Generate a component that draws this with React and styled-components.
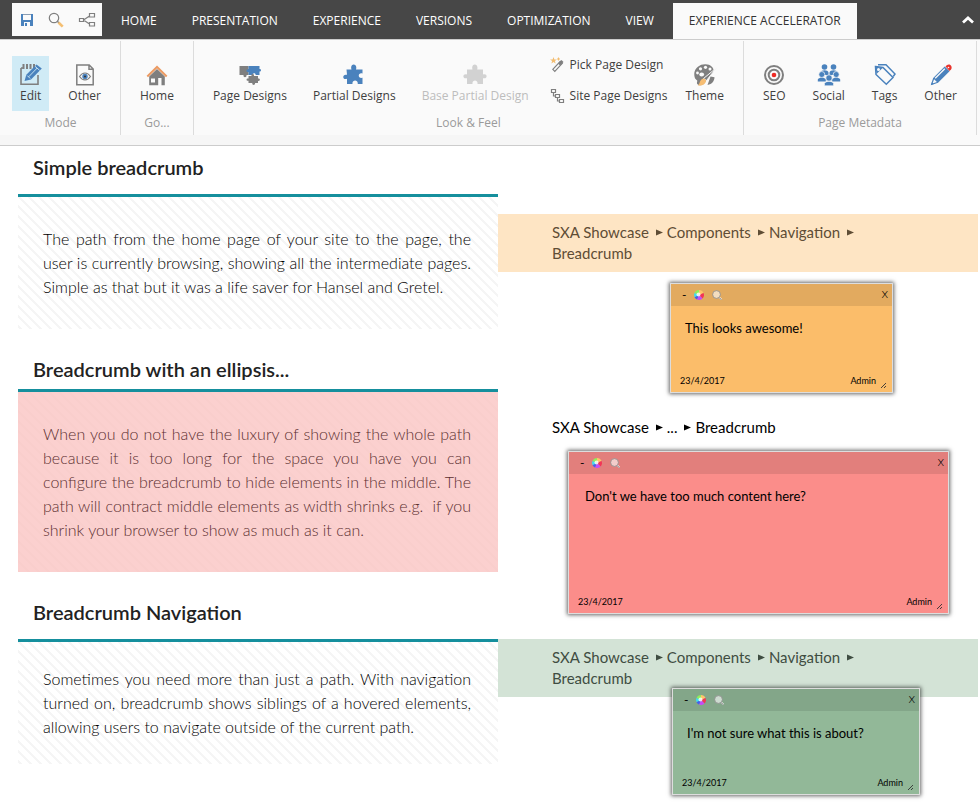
import React from "react";
import styled, { createGlobalStyle } from "styled-components";

const GRAY = "#7f7f7f";
const BLUE = "#4a82bd";
const UI_FONT = '"Open Sans", "Noto Sans", sans-serif';
const BODY_FONT = 'Lato, "Open Sans", sans-serif';

const GlobalStyle = createGlobalStyle`
  *, *::before, *::after { box-sizing: border-box; }
  body { margin: 0; min-height: 100vh; background: #fff; color: #000; font-family: ${BODY_FONT}; }
  button { font: inherit; color: inherit; background: none; border: 0; padding: 0; margin: 0; cursor: pointer; }
  h2, p { margin: 0; }
  svg { display: block; flex: none; }
`;

/* ---------- top bar ---------- */

const TopBar = styled.nav`
  display: flex;
  align-items: flex-end;
  height: 39px;
  padding: 0 6px 0 12px;
  background: #474747;
  font: 12px/18px ${UI_FONT};
`;

const QuickAccess = styled.div`
  display: flex;
  align-items: center;
  justify-content: space-between;
  align-self: flex-start;
  width: 90px;
  height: 33px;
  margin-top: 3px;
  margin-right: 3px;
  padding: 0 6px 0 8px;
  background: #fafafa;
`;

const TabList = styled.div`
  display: flex;
  flex: 1;
  gap: 3px;
`;

const Tab = styled.button`
  height: 36px;
  padding: 0 16px;
  white-space: nowrap;
  color: ${(p) => (p.$active ? "#333" : "#fff")};
  background: ${(p) => (p.$active ? "#fafafa" : "transparent")};
`;

const Collapse = styled.button`
  display: flex;
  align-self: center;
`;

/* ---------- ribbon ---------- */

const Ribbon = styled.section`
  display: flex;
  height: 107px;
  border-top: 1px solid #ccc;
  border-bottom: 1px solid #ccc;
  padding: 1px 0 10px 1px;
  background: linear-gradient(to right, #f6f6f6 830px, #fafafa 830px) bottom / 100% 10px no-repeat, #fafafa;
  font: 12px/18px ${UI_FONT};
  overflow: hidden;
`;

const Chunk = styled.div`
  display: flex;
  flex-direction: column;
  flex: none;
  padding: 15px 11px 0;
  border-right: 1px solid #dcdcdc;
`;

const ChunkTools = styled.div`
  display: flex;
  gap: ${(p) => (p.$dense ? 10 : 11)}px;
`;

const ChunkLabel = styled.div`
  margin-top: 3px;
  text-align: center;
  color: #9b9b9b;
`;

const BigButton = styled.button`
  display: flex;
  flex-direction: column;
  align-items: center;
  height: 55px;
  padding: 7px 8px 0;
  white-space: nowrap;
  color: ${(p) => (p.disabled ? "#bdbdbd" : "#404040")};
  background: ${(p) => (p.$selected ? "#d0ebf6" : "transparent")};
  & > svg { margin: 0 -2px; }
`;

const SmallStack = styled.div`
  display: flex;
  flex-direction: column;
  gap: 13px;
`;

const SmallButton = styled.button`
  display: flex;
  align-items: center;
  gap: 4px;
  padding: 0 0 0 3px;
  color: #404040;
  white-space: nowrap;
`;

/* ---------- page ---------- */

const Page = styled.main`
  display: flex;
  flex-direction: column;
  gap: 19px;
  padding: 0 2px 41px 18px;
`;

const Row = styled.section`
  display: grid;
  grid-template-columns: 1fr 1fr;
`;

const Title = styled.h2`
  padding: 9px 15px ${(p) => (p.$tight ? 8 : 15)}px;
  border-bottom: 3px solid #158f9d;
  font: 600 20px/24px ${BODY_FONT};
  color: #222;
`;

const Description = styled.p`
  --stripe: ${(p) => (p.$flagged ? "#f9cecc" : "#f5f5f5")};
  padding: ${(p) => (p.$compact ? "25px 27px 25px 25px" : "30px 27px 30px 25px")};
  font: 300 16px/24px ${BODY_FONT};
  text-align: justify;
  color: ${(p) => (p.$flagged ? "#5c2f30" : "#000")};
  background:
    linear-gradient(45deg,
      var(--stripe) 12%, transparent 12%, transparent 50%,
      var(--stripe) 50%, var(--stripe) 62%, transparent 62%) 0 0 / 10px 10px,
    ${(p) => (p.$flagged ? "#fbd0cf" : "#fff")};
`;

const Example = styled.div`
  position: relative;
  padding-top: ${(p) => p.$offset}px;
`;

const Band = styled.nav`
  display: flex;
  padding: 8px 96px 8px 54px;
  background: ${(p) => p.$bg || "transparent"};
  color: ${(p) => p.$ink || "#000"};
`;

const Crumbs = styled.ol`
  display: flex;
  flex-wrap: wrap;
  max-width: 310px;
  margin: 0;
  padding: 0;
  list-style: none;
  font: 15px/21px ${BODY_FONT};
`;

const Crumb = styled.li`
  display: flex;
  align-items: center;
  & > a { color: inherit; text-decoration: none; }
  & > svg { margin: 0 4px 0 7px; }
`;

/* ---------- sticky notes ---------- */

const Note = styled.article`
  position: absolute;
  z-index: 1;
  left: ${(p) => p.$x}px;
  top: ${(p) => p.$y}px;
  width: ${(p) => p.$w}px;
  height: ${(p) => p.$h}px;
  display: flex;
  flex-direction: column;
  border: 1px solid #ddd;
  box-shadow: 0 0 4px 1px rgba(0, 0, 0, 0.6);
  background: ${(p) => p.$bg};
`;

const NoteBar = styled.header`
  display: flex;
  align-items: center;
  gap: 8px;
  height: 22px;
  padding: 0 4px 0 11px;
  background: ${(p) => p.$bg};
  font: 12px/18px ${BODY_FONT};
  & > button:last-child { margin: 0 0 5px auto; font-weight: 300; font-size: 14px; }
`;

const NoteText = styled.p`
  flex: 1;
  padding: 12px ${(p) => p.$inset}px 0;
  font: 13px/20px ${BODY_FONT};
`;

const NoteFooter = styled.footer`
  display: flex;
  align-items: center;
  padding: 0 4px 3px 9px;
  font: 9px/16px ${BODY_FONT};
  & > :nth-child(2) { margin-left: auto; }
  & > svg { align-self: flex-end; margin-left: 4px; }
`;

/* ---------- icons ---------- */

const Icon = ({ size = 24, children }) => (
  <svg width={size} height={size} viewBox={`0 0 ${size} ${size}`} fill="none" aria-hidden="true">
    {children}
  </svg>
);

const SaveIcon = () => (
  <Icon size={14}>
    <path d="M1 1h12v12H1z" fill={BLUE} />
    <path d="M3 2h8v5H3zM4 9h6v4H4z" fill="#fafafa" />
    <path d="M5 10h2v3H5z" fill={BLUE} />
    <path d="M3 1.500h8" stroke="#8a9db3" />
  </Icon>
);
const SearchIcon = () => (
  <Icon size={16}>
    <circle cx="6" cy="6" r="4.7" stroke={GRAY} strokeWidth="1.2" />
    <path d="M9.3 9.3l2 2" stroke={GRAY} strokeWidth="1.4" />
    <path d="M10.5 10.5l4.2 4.2" stroke="#f4bf72" strokeWidth="2.6" />
  </Icon>
);
const FlowIcon = () => (
  <Icon size={18}>
    <path d="M1.500 7.500h4v3h-4zM11.500 2.500h5v3.500h-5zM11.500 11.500h5v3.500h-5zM5.500 9l6-4M5.500 9l6 4" stroke={GRAY} strokeWidth="1.2" />
  </Icon>
);
const ChevronIcon = () => (
  <Icon size={12}>
    <path d="M1 8.500L6 4l5 4.500" stroke="#fff" strokeWidth="2.800" />
  </Icon>
);
const EditIcon = () => (
  <Icon>
    <path d="M2 5v16.200h17V12M2 5h2M17 5h2v2" stroke={GRAY} strokeWidth="1.6" />
    <path d="M4.500 1v5M8 1v5M11.500 1v5M15 1v4" stroke={GRAY} strokeWidth="2" />
    <path d="M5.500 18l1.800-6.200L17.500 1.500 22.800 5.500 12 16.500z" fill={BLUE} />
    <path d="M8.300 12.600l2.900 2.900M9.800 13.700l8.400-8.700M16 3.300l4.600 4" stroke="#d0ebf6" strokeWidth="0.900" />
  </Icon>
);
const PageEyeIcon = () => (
  <Icon>
    <path d="M3.800 2h12.400L20.200 6v15.800H3.800zM16 2v4.200h4.200" stroke={GRAY} strokeWidth="1.500" />
    <path d="M6.500 13.500c3-4.700 8-4.700 11 0-3 4.500-8 4.500-11 0z" stroke={GRAY} strokeWidth="1.100" />
    <circle cx="12" cy="13.400" r="2.700" fill={BLUE} />
    <circle cx="12" cy="13.400" r="1" fill="#333" />
  </Icon>
);
const HomeIcon = () => (
  <Icon>
    <path d="M4.200 13.500L12 6l7.800 7.500v8.700h-3.300V15h-3.300v7.200h-9z" fill={GRAY} />
    <path d="M6 15.500h4v4H6z" fill="#fafafa" />
    <path d="M2.300 13.500L12 4l9.700 9.500" stroke="#eb9a62" strokeWidth="2" />
  </Icon>
);
const DesignsIcon = () => (
  <Icon>
    <path d="M1.500 3h9v3.200c2-1 3 1.800 0 2V12H8.500c.5 3-3.500 3-3 0H1.500z" fill={GRAY} />
    <path d="M10.500 3h11v3c2-.3 2 2.800 0 2.500V12h-3.800c0-2.500-3-2.500-3 0h-4.200V9c-2.700.5-2.700-3.200 0-2.800z" fill={BLUE} />
    <path d="M10.500 13h3c-.6-2.700 3-2.700 2.500 0h4v2.600c2.500-.5 2.500 2.800 0 2.300V20h-3c.6 2.500-3.200 2.500-2.700 0h-3.800v-2.200c-2.600.5-2.600-2.700 0-2.200z" fill={GRAY} />
  </Icon>
);
const PuzzleIcon = ({ color, right }) => (
  <Icon>
    <path
      d={
        right
          ? "M4.500 6.500H9.500C7.300 -.2 16 -.2 14 6.500h6.500v4c-5-1.500-5 5.500 0 4.300V21h-4.800c.8-4.600-6-4.600-5.200 0H5v-5.200c-5 1.800-5-5.300 0-4z"
          : "M4 6.500h5.500C7.500 -.2 16 -.2 14.200 6.500H20v5c4.800-1.500 4.800 5 0 3.700V21h-5.500c.8-4.600-5.800-4.600-5 0H4v-5.800c-4.800 1.300-4.800-5.200 0-3.700z"
      }
      fill={color}
    />
  </Icon>
);
const WandIcon = () => (
  <Icon size={16}>
    <path d="M3.500 0l.9 2.400 2.500.1-2 1.600.7 2.400-2.100-1.400-2.100 1.400.7-2.400-2-1.600 2.500-.1z" fill="#f3bd70" />
    <path d="M8.500 .5v3M7 2h3" stroke="#f3bd70" />
    <path d="M2.800 12.300l7.500-8 2 2-7.500 8z" stroke={GRAY} strokeWidth="1.200" />
    <path d="M8 6.500l3.500-3.500L13.500 5 10 8.500z" fill={GRAY} />
  </Icon>
);
const TreeIcon = () => (
  <Icon size={16}>
    <path d="M1.500 1.500h4v3h-4zM5.500 6.500h4v3h-4zM9.500 11.500h4v3h-4zM3.500 4.500V8h2M7.500 9.500V13h2" stroke={GRAY} strokeWidth="1.200" />
  </Icon>
);
const PaletteIcon = () => (
  <Icon>
    <path d="M1.300 10C2 4.500 7 1 12.500 1.200 17.500 1.300 21 4.500 20.700 8.500L13 17.500c-2 4.500-5 5.500-7.500 4.500-3-1.500-.5-3.500-1.500-4.700C3 16.500 1 15.500 1.300 10z" fill={GRAY} />
    <g fill="#fafafa">
      <circle cx="7.500" cy="5.800" r="1.600" /><circle cx="12.500" cy="4.300" r="1.600" /><circle cx="17" cy="6" r="1.500" /><circle cx="4.500" cy="10" r="1.400" /><ellipse cx="8.700" cy="11.500" rx="2.400" ry="2" />
    </g>
    <path d="M23.500 4.800L13.500 17.500l-3-2z" fill={GRAY} stroke="#fafafa" strokeWidth="1" />
    <path d="M17.500 13.500l4 .8c0 3.500-2.500 7.200-7 7.700z" fill={GRAY} />
    <path d="M9 16c3.500-1 5 1.500 3.200 4C10.500 22.500 7.500 22.800 4.800 22.500 7 21 6.500 17.500 9 16z" fill="#f6bd72" />
  </Icon>
);
const TargetIcon = () => (
  <Icon>
    <circle cx="12" cy="12" r="9" stroke={GRAY} strokeWidth="2" />
    <circle cx="12" cy="12" r="5.300" stroke={GRAY} strokeWidth="2" />
    <circle cx="12" cy="12" r="2.300" fill="#ed2a24" />
  </Icon>
);
const PeopleIcon = () => (
  <Icon>
    <g fill={BLUE}>
      <circle cx="7.500" cy="4" r="2.800" /><circle cx="16.500" cy="4" r="2.800" />
      <path d="M3.500 9.500c.5-3 7.500-3 8 0V12h-8zM12.500 9.500c.5-3 7.500-3 8 0V12h-8z" />
      <circle cx="4.800" cy="11.500" r="3" stroke="#fafafa" strokeWidth="0.700" /><circle cx="19.200" cy="11.500" r="3" stroke="#fafafa" strokeWidth="0.700" />
      <path d="M.8 16.500c.5-2.500 7.500-2.500 8 0v2h-8zM15.200 16.500c.5-2.500 7.500-2.500 8 0v2h-8z" />
      <circle cx="12" cy="15" r="3.200" stroke="#fafafa" strokeWidth="0.700" />
      <path d="M7.500 20.500c.5-2.800 8.500-2.800 9 0v2.300h-9z" stroke="#fafafa" strokeWidth="0.600" />
    </g>
  </Icon>
);
const TagsIcon = () => (
  <Icon>
    <path d="M2.500 3.500L10 4.500l10 10-6.700 6.800L3 11.500z" stroke={BLUE} strokeWidth="1.500" />
    <path d="M5 1.700h8l9 9.300-1.800 2.500" stroke={BLUE} strokeWidth="1.500" />
    <path d="M2.500 3.500l7 1.500L3.500 11z" fill={BLUE} />
    <circle cx="5.500" cy="6.500" r="1.500" fill="#fafafa" />
  </Icon>
);
const PencilIcon = () => (
  <Icon>
    <path d="M2.700 21.300l2-6L15.700 4.300 19.700 8.300 8.700 19.300z" fill={BLUE} stroke={BLUE} strokeWidth="1.200" />
    <path d="M6.200 15.300L15.800 5.700" stroke="#fafafa" strokeWidth="1.300" />
    <path d="M3.500 20.500l1.600-4.300 2.800 2.800z" fill="#fafafa" />
    <path d="M2 22l1-3 2 2z" fill={BLUE} />
    <path d="M16.500 3.500l1.500-1.500c3-2 6 1.500 4 4.500l-1.500 1.500z" fill="#e8332c" />
    <circle cx="19.500" cy="4.500" r="0.800" fill="#fafafa" />
  </Icon>
);
const Arrow = () => (
  <svg width="7" height="7" viewBox="0 0 7 7" aria-hidden="true">
    <path d="M0 0.500L7 3.500L0 6.500z" fill="currentColor" />
  </svg>
);
const ColorBall = () => (
  <Icon size={10}>
    <path d="M5 5L0.500 3A5 5 0 0 1 5 0z" fill="#8ff05c" />
    <path d="M5 5V0a5 5 0 0 1 4.500 3z" fill="#ffc56b" />
    <path d="M5 5l4.500-2A5 5 0 0 1 8.500 8.500z" fill="#f33655" />
    <path d="M5 5l3.500 3.500A5 5 0 0 1 3 9.600z" fill="#c64df5" />
    <path d="M5 5L3 9.600A5 5 0 0 1 .5 7z" fill="#435ef0" />
    <path d="M5 5L.5 7a5 5 0 0 1 0-4z" fill="#3cdff2" />
    <circle cx="4.500" cy="4.500" r="2" fill="#fff" fillOpacity="0.800" />
  </Icon>
);
const LensIcon = () => (
  <Icon size={10}>
    <circle cx="4.500" cy="4.500" r="3.900" fill="#fff" fillOpacity="0.600" stroke="#888" strokeWidth="0.800" />
    <path d="M7.500 7.500l2 2" stroke="#fff" strokeWidth="1.500" />
    <path d="M7.300 7.500l2 2.300" stroke="#777" />
  </Icon>
);
const Grip = () => (
  <Icon size={8}>
    <path d="M1 7l5-5M4 7l2-2" stroke="#333" strokeWidth="0.900" />
  </Icon>
);

/* ---------- composition ---------- */

const tabs = ["HOME", "PRESENTATION", "EXPERIENCE", "VERSIONS", "OPTIMIZATION", "VIEW", "EXPERIENCE ACCELERATOR"];

const Tool = ({ icon, label, ...rest }) => (
  <BigButton type="button" {...rest}>
    {icon}
    {label}
  </BigButton>
);

const Group = ({ label, dense, children }) => (
  <Chunk>
    <ChunkTools $dense={dense}>{children}</ChunkTools>
    <ChunkLabel>{label}</ChunkLabel>
  </Chunk>
);

const Breadcrumb = ({ items, bg, ink }) => (
  <Band $bg={bg} $ink={ink} aria-label="Breadcrumb">
    <Crumbs>
      {items.map((item, i) => (
        <Crumb key={item}>
          <a href="#page">{item}</a>
          {i < items.length - 1 && <Arrow />}
        </Crumb>
      ))}
    </Crumbs>
  </Band>
);

const StickyNote = ({ x, y, w, h, bg, bar, inset = 14, children }) => (
  <Note $x={x} $y={y} $w={w} $h={h} $bg={bg}>
    <NoteBar $bg={bar}>
      <button type="button" aria-label="Minimize">-</button>
      <button type="button" aria-label="Color"><ColorBall /></button>
      <button type="button" aria-label="Find"><LensIcon /></button>
      <button type="button" aria-label="Close">x</button>
    </NoteBar>
    <NoteText $inset={inset}>{children}</NoteText>
    <NoteFooter>
      <time dateTime="2017-04-23">23/4/2017</time>
      <span>Admin</span>
      <Grip />
    </NoteFooter>
  </Note>
);

const fullPath = ["SXA Showcase", "Components", "Navigation", "Breadcrumb"];

export default function App() {
  return (
    <>
      <GlobalStyle />
      <TopBar>
        <QuickAccess>
          <button type="button" aria-label="Save"><SaveIcon /></button>
          <button type="button" aria-label="Search"><SearchIcon /></button>
          <button type="button" aria-label="Workflow"><FlowIcon /></button>
        </QuickAccess>
        <TabList>
          {tabs.map((tab, i) => (
            <Tab key={tab} type="button" $active={i === tabs.length - 1}>{tab}</Tab>
          ))}
        </TabList>
        <Collapse type="button" aria-label="Collapse ribbon"><ChevronIcon /></Collapse>
      </TopBar>

      <Ribbon>
        <Group label="Mode">
          <Tool icon={<EditIcon />} label="Edit" $selected />
          <Tool icon={<PageEyeIcon />} label="Other" />
        </Group>
        <Group label="Go...">
          <Tool icon={<HomeIcon />} label="Home" />
        </Group>
        <Group label="Look &amp; Feel" dense>
          <Tool icon={<DesignsIcon />} label="Page Designs" />
          <Tool icon={<PuzzleIcon color={BLUE} right />} label="Partial Designs" />
          <Tool icon={<PuzzleIcon color="#d2d2d2" />} label="Base Partial Design" disabled />
          <SmallStack>
            <SmallButton type="button"><WandIcon />Pick Page Design</SmallButton>
            <SmallButton type="button"><TreeIcon />Site Page Designs</SmallButton>
          </SmallStack>
          <Tool icon={<PaletteIcon />} label="Theme" />
        </Group>
        <Group label="Page Metadata">
          <Tool icon={<TargetIcon />} label="SEO" />
          <Tool icon={<PeopleIcon />} label="Social" />
          <Tool icon={<TagsIcon />} label="Tags" />
          <Tool icon={<PencilIcon />} label="Other" />
        </Group>
      </Ribbon>

      <Page>
        <Row>
          <div>
            <Title>Simple breadcrumb</Title>
            <Description>
              The path from the home page of your site to the page, the user is currently browsing, showing all the
              intermediate pages. Simple as that but it was a life saver for Hansel and Gretel.
            </Description>
          </div>
          <Example $offset={68}>
            <Breadcrumb items={fullPath} bg="#fee5c4" ink="#5f4d35" />
            <StickyNote x={172} y={137} w={223} h={110} bg="#fbbd6a" bar="#e2aa5f">This looks awesome!</StickyNote>
          </Example>
        </Row>

        <Row>
          <div>
            <Title $tight>Breadcrumb with an ellipsis...</Title>
            <Description $flagged>
              When you do not have the luxury of showing the whole path because it is too long for the space you have
              you can configure the breadcrumb to hide elements in the middle. The path will contract middle elements as
              width shrinks e.g.&nbsp; if you shrink your browser to show as much as it can.
            </Description>
          </div>
          <Example $offset={61}>
            <Breadcrumb items={["SXA Showcase", "...", "Breadcrumb"]} />
            <StickyNote x={70} y={103} w={381} h={163} bg="#fb8d8a" bar="#e27f7c" inset={16}>
              Don't we have too much content here?
            </StickyNote>
          </Example>
        </Row>

        <Row>
          <div>
            <Title>Breadcrumb Navigation</Title>
            <Description $compact>
              Sometimes you need more than just a path. With navigation turned on, breadcrumb shows siblings of a
              hovered elements, allowing users to navigate outside of the current path.
            </Description>
          </div>
          <Example $offset={48}>
            <Breadcrumb items={fullPath} bg="#d3e3d6" ink="#3f4d42" />
            <StickyNote x={174} y={97} w={248} h={107} bg="#92b898" bar="#83a689">
              I'm not sure what this is about?
            </StickyNote>
          </Example>
        </Row>
      </Page>
    </>
  );
}
